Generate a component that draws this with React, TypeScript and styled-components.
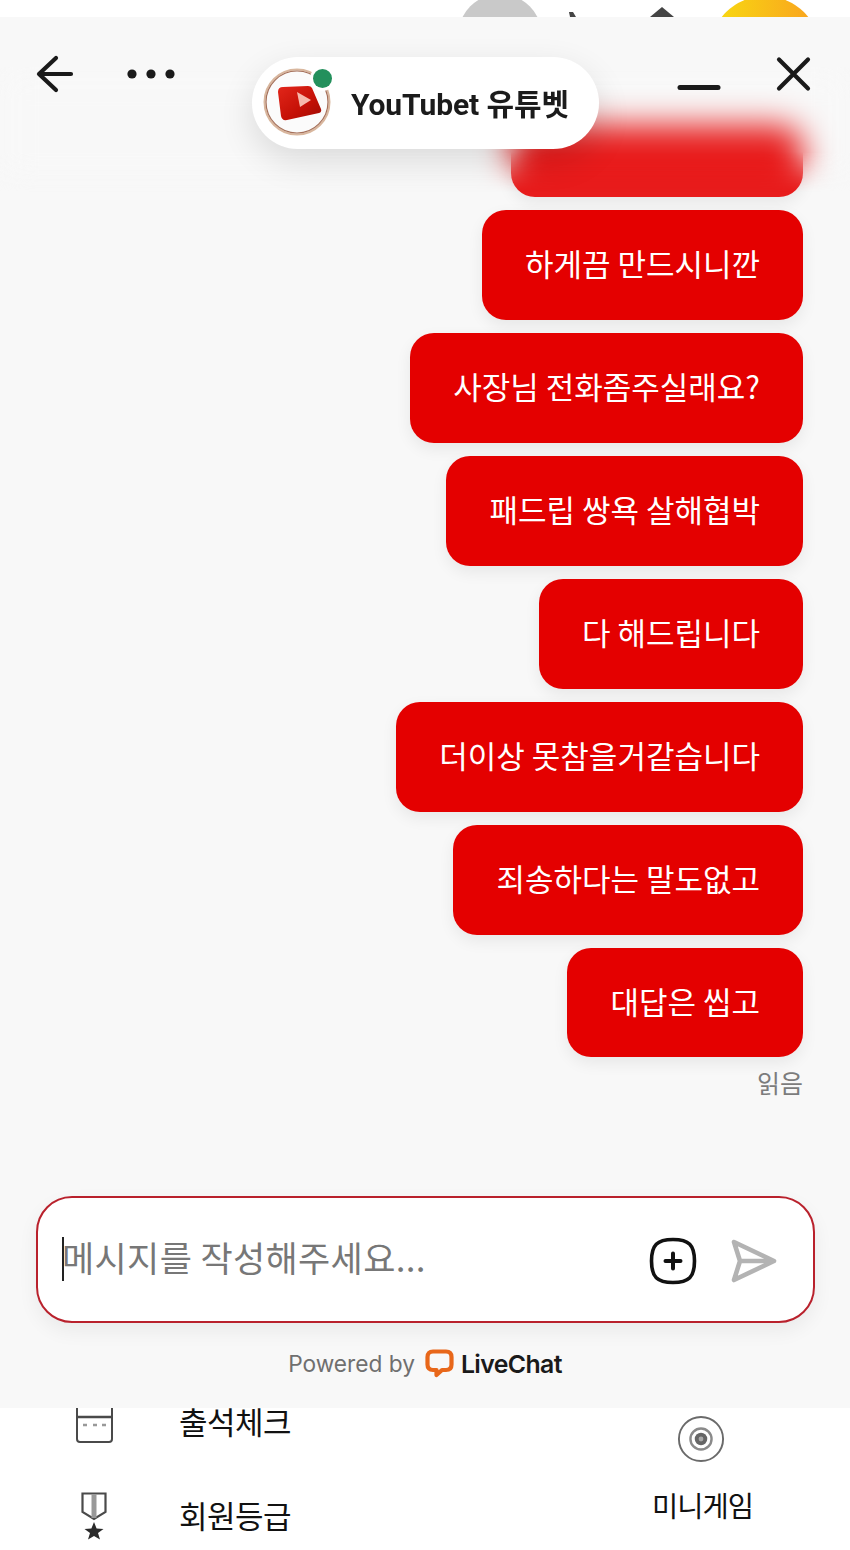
import React from 'react';
import styled, { createGlobalStyle } from 'styled-components';

const GlobalStyle = createGlobalStyle`
  html, body {
    margin: 0;
    padding: 0;
    background: #fff;
  }
  * {
    box-sizing: border-box;
  }
`;

const Page = styled.div`
  width: 850px;
  height: 1550px;
  overflow: hidden;
  display: flex;
  flex-direction: column;
  background: #fff;
  font-family: 'Noto Sans CJK KR', 'Noto Sans', sans-serif;
`;

const TopStrip = styled.div`
  height: 17px;
  flex: none;
  display: flex;
  align-items: flex-start;
  padding-left: 458px;
  overflow: hidden;
`;

const TopCircle = styled.div<{ $size: number; $bg: string; $gap: number; $top: number }>`
  flex: none;
  width: ${(p) => p.$size}px;
  height: ${(p) => p.$size}px;
  margin-left: ${(p) => p.$gap}px;
  margin-top: ${(p) => p.$top}px;
  border-radius: 50%;
  background: ${(p) => p.$bg};
`;

const TopGlyph = styled.svg<{ $gap: number }>`
  flex: none;
  margin-left: ${(p) => p.$gap}px;
`;

const Panel = styled.div`
  position: relative;
  height: 1391px;
  flex: none;
  display: flex;
  flex-direction: column;
  background: #f8f8f8;
  overflow: hidden;
`;

const Header = styled.div`
  position: absolute;
  top: 0;
  left: 0;
  right: 0;
  height: 115px;
  display: flex;
  align-items: flex-start;
  justify-content: space-between;
  padding: 35px 35px 0 33px;
`;

const HeaderGroup = styled.div<{ $gap: number }>`
  display: flex;
  align-items: flex-start;
  gap: ${(p) => p.$gap}px;
`;

const IconButton = styled.div<{ $w: number }>`
  width: ${(p) => p.$w}px;
  height: 44px;
  display: flex;
  align-items: center;
  justify-content: center;
`;

const BlurOverlay = styled.div`
  position: absolute;
  top: 50px;
  left: 0;
  right: 0;
  height: 125px;
  backdrop-filter: blur(16px);
  mask-image: linear-gradient(to bottom, #000 0%, #000 68%, transparent 100%);
`;

const TitlePill = styled.div`
  position: absolute;
  top: 40px;
  left: 252px;
  width: 347px;
  height: 92px;
  display: flex;
  align-items: center;
  padding-left: 11px;
  border-radius: 46px;
  background: #fff;
  box-shadow: 0 12px 34px rgba(0, 0, 0, 0.12);
`;

const Avatar = styled.div`
  position: relative;
  width: 70px;
  height: 70px;
  flex: none;
`;

const OnlineDot = styled.div`
  position: absolute;
  top: 1px;
  right: 1px;
  width: 19px;
  height: 19px;
  border-radius: 50%;
  background: #23905c;
  box-shadow: 0 0 0 3px #fff;
`;

const TitleText = styled.div`
  margin-left: 18px;
  margin-top: -3px;
  font-family: Roboto, 'Noto Sans CJK KR', sans-serif;
  font-size: 30px;
  font-weight: 700;
  letter-spacing: -0.1px;
  color: #1b1b1b;
  white-space: nowrap;
`;

const MessageList = styled.div`
  display: flex;
  flex-direction: column;
  align-items: flex-end;
  gap: 13.4px;
  padding: 108px 47px 0 0;
`;

const Bubble = styled.div<{ $blank?: boolean }>`
  height: ${(p) => (p.$blank ? '71.6px' : '109.6px')};
  display: flex;
  align-items: center;
  padding: 0 43px 4px;
  border-radius: 24px;
  background: ${(p) => (p.$blank ? '#e81c1c' : '#e40000')};
  box-shadow: 0 6px 16px rgba(0, 0, 0, 0.07);
  color: #fff;
  font-size: 31px;
  white-space: nowrap;
  ${(p) => (p.$blank ? 'width: 292px;' : '')}
`;

const ReadLabel = styled.div`
  margin-top: -7px;
  font-size: 25px;
  line-height: 36px;
  color: #7c7c7c;
`;

const Composer = styled.div`
  margin: auto 35.5px 0 36px;
  height: 127px;
  flex: none;
  display: flex;
  align-items: center;
  padding: 0 36px 0 24px;
  border: 2.5px solid #b9212c;
  border-radius: 36px;
  background: #fff;
  box-shadow: 0 8px 20px rgba(0, 0, 0, 0.06);
`;

const Placeholder = styled.div`
  flex: 1;
  height: 44px;
  margin-top: -1px;
  padding-bottom: 5px;
  display: flex;
  align-items: center;
  border-left: 2px solid #222;
  font-size: 35px;
  letter-spacing: 0.35px;
  color: #777;
  white-space: nowrap;
  text-indent: -2px;
`;

const ComposerIcons = styled.div`
  display: flex;
  align-items: center;
  gap: 34px;
  margin-top: 2px;
`;

const PoweredRow = styled.div`
  height: 85px;
  flex: none;
  display: flex;
  align-items: center;
  justify-content: center;
  padding-bottom: 4px;
  font-family: Inter, 'Noto Sans', sans-serif;
  font-size: 22.7px;
  color: #6f6f6f;
`;

const LiveChatName = styled.span`
  margin-left: 7px;
  font-size: 24.8px;
  font-weight: 600;
  letter-spacing: -0.6px;
  color: #1a1a1a;
`;

const LiveChatMark = styled.svg`
  margin-left: 10px;
  flex: none;
`;

const BottomMenu = styled.div`
  flex: 1;
  display: flex;
  justify-content: space-between;
  overflow: hidden;
  padding: 0 97px 0 75px;
  color: #111;
`;

const MenuColumn = styled.div`
  display: flex;
  flex-direction: column;
  gap: 45px;
  margin-top: -12px;
`;

const MenuRow = styled.div`
  display: flex;
  align-items: center;
  height: 49px;
  font-size: 31px;
  letter-spacing: -0.5px;
`;

const MenuIconSlot = styled.div<{ $top: number; $left: number }>`
  width: ${(p) => 104 - p.$left}px;
  flex: none;
  display: flex;
  margin-top: ${(p) => p.$top}px;
  margin-left: ${(p) => p.$left}px;
`;

const GameItem = styled.div`
  display: flex;
  flex-direction: column;
  align-items: center;
  gap: 21px;
  padding-top: 7px;
  font-size: 28.5px;
  letter-spacing: -1px;
`;

const GameIconWrap = styled.div`
  width: 48px;
  height: 48px;
  margin-right: 4px;
`;

const messages = [
  '하게끔 만드시니깐',
  '사장님 전화좀주실래요?',
  '패드립 쌍욕 살해협박',
  '다 해드립니다',
  '더이상 못참을거같습니다',
  '죄송하다는 말도없고',
  '대답은 씹고',
];

const ICON_DARK = '#1a1a1a';

const LogoMark = () => (
  <svg width="70" height="70" viewBox="0 0 70 70">
    <defs>
      <linearGradient id="gem" x1="0" y1="0" x2="1" y2="1">
        <stop offset="0" stopColor="#e2261a" />
        <stop offset="0.6" stopColor="#c41006" />
        <stop offset="1" stopColor="#9d0b04" />
      </linearGradient>
    </defs>
    <circle cx="34" cy="34" r="32.5" fill="#fbfbfb" stroke="#d9b79e" strokeWidth="2" />
    <circle cx="34" cy="34" r="31" fill="none" stroke="#a5705a" strokeWidth="1.2" />
    <path d="M15 24 Q15 19 20 19 L45 18 Q48 18 49 20 L58 41 Q59 44 56 45 L24 52 Q19 53 18 48 Z" fill="url(#gem)" />
    <path d="M34 24 L48 32 L37 39 Z" fill="#f6b9ac" />
  </svg>
);

const PlusSquare = () => (
  <svg width="48" height="48" viewBox="0 0 48 48" fill="none" stroke="#111" strokeLinecap="round">
    <path d="M24 2.5 C40 2.5 45.5 8 45.5 24 C45.5 40 40 45.5 24 45.5 C8 45.5 2.5 40 2.5 24 C2.5 8 8 2.5 24 2.5 Z" strokeWidth="3.6" />
    <path d="M24 16.5 V31.5 M16.5 24 H31.5" strokeWidth="4" />
  </svg>
);

const SendArrow = () => (
  <svg width="46" height="44" viewBox="0 0 46 44" fill="none" stroke="#b3b3b3" strokeWidth="4.6" strokeLinejoin="round">
    <path d="M3 3 L43 22 L3 41 L9 22 Z M9 22 H43" />
  </svg>
);

const LiveChatLogo = () => (
  <LiveChatMark width="29" height="30" viewBox="0 0 29 30" fill="none">
    <path d="M8 2.5 H21 Q26.5 2.5 26.5 8 V15.5 Q26.5 21 21 21 H17 L11.5 26 V21 H8 Q2.5 21 2.5 15.5 V8 Q2.5 2.5 8 2.5 Z" stroke="#e8671a" strokeWidth="4.2" strokeLinejoin="round" />
  </LiveChatMark>
);

const CalendarIcon = () => (
  <svg width="39" height="36" viewBox="0 0 39 36" fill="none" stroke="#4a4a4a" strokeWidth="2">
    <path d="M2 0 V32 Q2 35 5 35 H34 Q37 35 37 32 V0" />
    <path d="M2 10 H37" strokeWidth="2.5" />
    <path d="M8 18 H12 M18 18 H22 M27 18 H31" stroke="#999" strokeWidth="2.5" />
  </svg>
);

const MedalIcon = () => (
  <svg width="26" height="48" viewBox="0 0 26 48">
    <path d="M1.5 1.5 H24.5 V20 L13 27 L1.5 20 Z" fill="none" stroke="#4a4a4a" strokeWidth="2.2" />
    <path d="M13 2 V26" stroke="#999" strokeWidth="5" />
    <path d="M13 30 L15.6 36.5 L22.5 37 L17 41 L19 47.5 L13 44 L7 47.5 L9 41 L3.5 37 L10.4 36.5 Z" fill="#2a2a2a" />
  </svg>
);

const GameIcon = () => (
  <svg width="48" height="48" viewBox="0 0 50 50" fill="none">
    <circle cx="25" cy="25" r="23" stroke="#6a6a6a" strokeWidth="2" />
    <circle cx="25" cy="25" r="11" stroke="#8a8a8a" strokeWidth="2.5" />
    <circle cx="25" cy="25" r="6.5" fill="#666" />
    <circle cx="25" cy="25" r="2.5" fill="#aaa" />
  </svg>
);

export default function App() {
  return (
    <Page>
      <GlobalStyle />
      <TopStrip>
        <TopCircle $size={84} $bg="#c9c9c9" $gap={0} $top={-6} />
        <TopGlyph $gap={25} width="10" height="17" viewBox="0 0 10 17">
          <path d="M2 12 L6 12 L9 17 L3 17 Z" fill="#444" />
        </TopGlyph>
        <TopGlyph $gap={73} width="24" height="17" viewBox="0 0 24 17">
          <path d="M12 7 L24 17 H0 Z" fill="#444" />
        </TopGlyph>
        <TopCircle $size={110} $bg="linear-gradient(90deg, #f8dc10, #f9a020)" $gap={36} $top={-4} />
      </TopStrip>
      <Panel>
        <MessageList>
          <Bubble $blank />
          {messages.map((text) => (
            <Bubble key={text}>{text}</Bubble>
          ))}
          <ReadLabel>읽음</ReadLabel>
        </MessageList>
        <Composer>
          <Placeholder>메시지를 작성해주세요...</Placeholder>
          <ComposerIcons>
            <PlusSquare />
            <SendArrow />
          </ComposerIcons>
        </Composer>
        <PoweredRow>
          Powered by
          <LiveChatLogo />
          <LiveChatName>LiveChat</LiveChatName>
        </PoweredRow>
        <BlurOverlay />
        <Header>
          <HeaderGroup $gap={47}>
            <IconButton $w={44}>
              <svg width="44" height="44" viewBox="0 0 44 44" fill="none" stroke={ICON_DARK} strokeWidth="4.2" strokeLinecap="round" strokeLinejoin="round">
                <path d="M38 22 H6 M23 6 L6 22 L23 38" />
              </svg>
            </IconButton>
            <IconButton $w={54}>
              <svg width="50" height="12" viewBox="0 0 50 12" fill={ICON_DARK}>
                <circle cx="6" cy="6" r="4.6" />
                <circle cx="25" cy="6" r="4.6" />
                <circle cx="44" cy="6" r="4.6" />
              </svg>
            </IconButton>
          </HeaderGroup>
          <HeaderGroup $gap={50}>
            <IconButton $w={44}>
              <svg width="44" height="44" viewBox="0 0 44 44">
                <path d="M3 35.5 H41" stroke={ICON_DARK} strokeWidth="5" strokeLinecap="round" />
              </svg>
            </IconButton>
            <IconButton $w={44}>
              <svg width="44" height="44" viewBox="0 0 44 44" fill="none" stroke={ICON_DARK} strokeWidth="4.2" strokeLinecap="round">
                <path d="M8 7.5 L37 36.5 M37 7.5 L8 36.5" />
              </svg>
            </IconButton>
          </HeaderGroup>
        </Header>
        <TitlePill>
          <Avatar>
            <LogoMark />
            <OnlineDot />
          </Avatar>
          <TitleText>YouTubet 유튜벳</TitleText>
        </TitlePill>
      </Panel>
      <BottomMenu>
        <MenuColumn>
          <MenuRow>
            <MenuIconSlot $top={8} $left={0}>
              <CalendarIcon />
            </MenuIconSlot>
            출석체크
          </MenuRow>
          <MenuRow>
            <MenuIconSlot $top={2} $left={6}>
              <MedalIcon />
            </MenuIconSlot>
            회원등급
          </MenuRow>
        </MenuColumn>
        <GameItem>
          <GameIconWrap>
            <GameIcon />
          </GameIconWrap>
          미니게임
        </GameItem>
      </BottomMenu>
    </Page>
  );
}
